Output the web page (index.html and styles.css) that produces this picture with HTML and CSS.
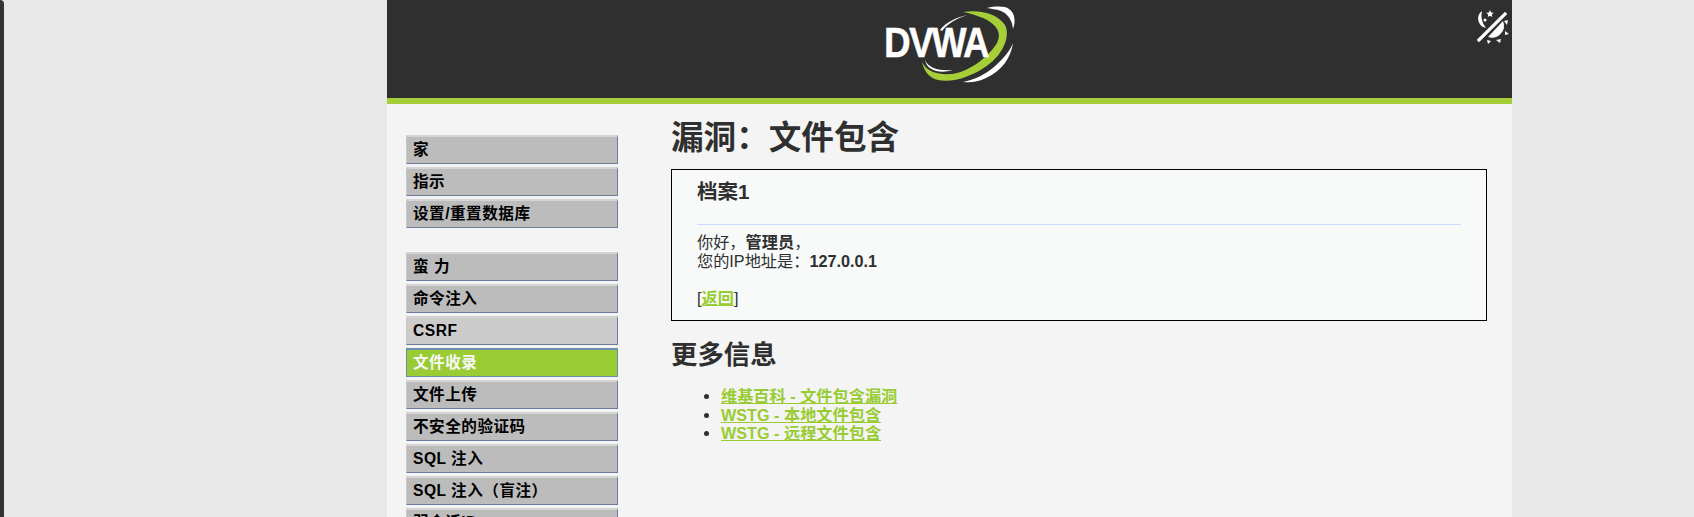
FILE: index.html
```html
<!DOCTYPE html>
<html lang="zh">
<head>
<meta charset="utf-8">
<title>DVWA</title>
<link rel="stylesheet" href="styles.css">
</head>
<body>
<div class="strip"></div>
<div class="page">
  <header class="header">
    <div class="logo">
      <svg class="logo-swoosh" viewBox="0 0 145 80" width="145" height="80" aria-hidden="true">
        <path d="M83 7 C100 4 118 9 125 20 C131 32 122 50 108 60 C92 72 72 78 58 75 C49 73 44 66 42 57 C46 65 54 70 72 69 C88 67 108 53 117 38 C123 26 116 14 83 7Z" fill="#a6ce39"/>
        <path d="M107 3 C116 1 125 1 129 4 C135 8 136 17 133 24 C132 15 128 9 121 6 C116 4 111 4 107 3Z" fill="#fff"/>
        <path d="M133 38 C131 52 122 66 106 73 C98 77 90 78 83 77 C94 75 106 69 114 62 C123 54 130 46 133 38Z" fill="#fff"/>
        <path d="M60 25 C65 18 76 12 88 10 C77 13 67 19 62 26Z" fill="#fff"/>
        <path d="M45 55 C49 64 60 66 73 65 C60 69 47 66 45 55Z" fill="#fff"/>
      </svg>
      <span class="logo-text">DVWA</span>
    </div>
    <svg class="theme-icon" viewBox="0 0 34 36" width="34" height="36" aria-hidden="true">
      <path d="M7 2 A9.500 9.500 0 0 0 11 19 A20 20 0 0 1 7 2Z" fill="#fff"/>
      <path d="M15 1 l1.100 2.400 2.600 .3 -1.900 1.700 .5 2.600 -2.300 -1.300 -2.300 1.300 .5 -2.600 -1.900 -1.700 2.600 -.3z" fill="#fff"/>
      <circle cx="10" cy="11" r="1.500" fill="#fff"/>
      <path d="M4 31 L30 5" stroke="#fff" stroke-width="3.300" stroke-linecap="square"/>
      <path d="M28 12 L13 28 A12 12 0 0 0 28 12Z" fill="#fff"/>
      <path d="M29 12 l4 -1 -1 5z M30 22 l4 3 -4 1z M21 31 l5 -1 -1 4z M12 31 l4 1 -3 3z" fill="#fff"/>
    </svg>
  </header>
  <div class="greenbar"></div>
  <div class="body">
    <nav class="menu">
      <ul class="menu-group">
        <li class="menu-item">家</li>
        <li class="menu-item">指示</li>
        <li class="menu-item">设置/重置数据库</li>
      </ul>
      <ul class="menu-group">
        <li class="menu-item">蛮 力</li>
        <li class="menu-item">命令注入</li>
        <li class="menu-item hover">CSRF</li>
        <li class="menu-item active">文件收录</li>
        <li class="menu-item">文件上传</li>
        <li class="menu-item">不安全的验证码</li>
        <li class="menu-item">SQL 注入</li>
        <li class="menu-item">SQL 注入（盲注）</li>
        <li class="menu-item">弱会话ID</li>
      </ul>
    </nav>
    <main class="content">
      <h1 class="title">漏洞：文件包含</h1>
      <section class="box">
        <h3 class="box-title">档案1</h3>
        <hr class="rule">
        <p class="box-text">你好，<b>管理员</b>，<br>您的IP地址是：<b>127.0.0.1</b></p>
        <p class="box-back">[<a href="#">返回</a>]</p>
      </section>
      <h2 class="subtitle">更多信息</h2>
      <ul class="links">
        <li><a href="#">维基百科 - 文件包含漏洞</a></li>
        <li><a href="#">WSTG - 本地文件包含</a></li>
        <li><a href="#">WSTG - 远程文件包含</a></li>
      </ul>
    </main>
  </div>
</div>
</body>
</html>
```
FILE: styles.css
```css
* { box-sizing: border-box; }
html, body { margin: 0; height: 517px; overflow: hidden; }
body {
  display: flex;
  background: #e8e8e8;
  color: #2f2f2f;
  font-family: "Liberation Sans", "Noto Sans CJK SC", sans-serif;
  font-size: 16.2px;
}
.strip { width: 4px; flex: none; background: #333; border-top-right-radius: 4px; }
.page { width: 1125px; margin-left: 383px; flex: none; background: #f4f4f4; height: 517px; overflow: hidden; }
.header {
  height: 98px;
  background: #2f2f2f;
  display: flex;
  justify-content: center;
  position: relative;
}
.logo { width: 145px; height: 80px; margin: 5px 0 0 6px; position: relative; }
.logo-swoosh { display: block; }
.logo-text {
  position: absolute;
  left: 4px;
  top: 14px;
  color: #fff;
  font-weight: bold;
  font-size: 42px;
  line-height: 48px;
  letter-spacing: -2px;
  transform: scaleX(.88);
  transform-origin: left center;
  -webkit-text-stroke: .4px #fff;
}
.theme-icon { position: absolute; left: 1088px; top: 9px; }
.greenbar { height: 6px; background: #a6ce39; }
.body { display: flex; padding: 0 24px 0 19px; }
.menu { width: 212px; flex: none; padding-top: 31px; }
.menu-group { list-style: none; margin: 0 0 24px; padding: 0; display: flex; flex-direction: column; gap: 3px; }
.menu-item {
  height: 29px;
  background: #bcbcbc;
  border-top: 2px solid #d4d4d4;
  border-bottom: 1px solid #6d7c9c;
  border-right: 1px solid #6d7c9c;
  border-left: 1px solid #c8c8c8;
  padding-left: 6px;
  color: #000;
  font-weight: bold;
  font-size: 15.6px;
  letter-spacing: .5px;
  line-height: 26px;
}
.menu-item.hover { background: #cccccc; }
.menu-item.active { background: #99cc33; color: #f8f8f8; border: 1px solid #6d8cae; border-top-width: 2px; }
.content { flex: 1; margin-left: 53px; min-width: 0; padding-top: 17px; }
.title { margin: 0 0 14px; font-size: 32.6px; line-height: 34px; font-weight: bold; height: 34px; }
.box {
  width: 816px;
  height: 152px;
  border: 1px solid #000;
  background: #f8fafa;
  padding: 0 25px;
}
.box-title { margin: 0; padding-top: 10px; font-size: 20.5px; line-height: 24px; font-weight: bold; }
.rule { margin: 20px 0 0; border: 0; height: 1px; background: #c8dcff; }
.box-text { margin: 8px 0 0; line-height: 19px; }
.box-back { margin: 18px 0 0; line-height: 19px; }
a { color: #99cc33; font-weight: bold; }
.subtitle { margin: 18px 0 0; font-size: 26.4px; line-height: 32px; font-weight: bold; }
.links { margin: 16px 0 0; padding-left: 50px; line-height: 18.500px; }
```
